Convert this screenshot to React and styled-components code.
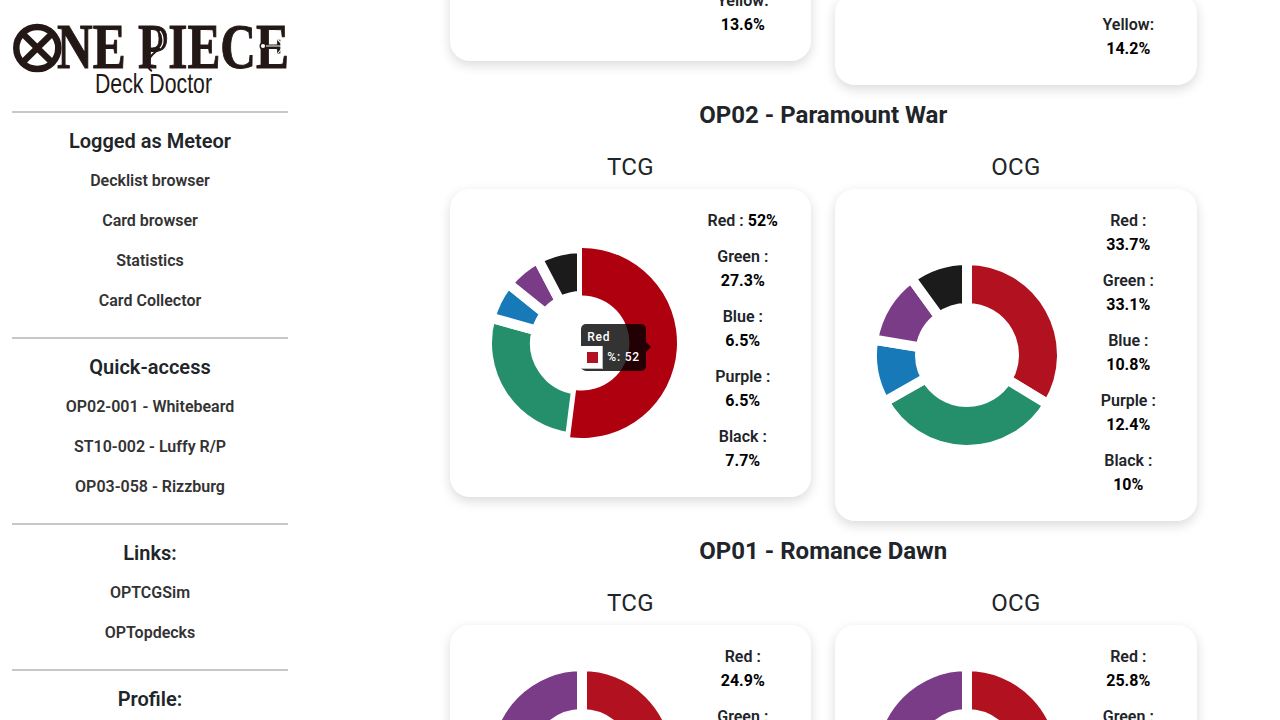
import React from "react";
import styled, { createGlobalStyle } from "styled-components";

const COLORS = {
  Red: "#b2121f",
  Green: "#258f6c",
  Blue: "#1879b8",
  Purple: "#7a3c87",
  Black: "#1b1b1b",
};

const SETS = [
  {
    title: "OP02 - Paramount War",
    tcg: { rows: [["Red", 52], ["Green", 27.3], ["Blue", 6.5], ["Purple", 6.5], ["Black", 7.7]], hover: 0 },
    ocg: { rows: [["Red", 33.7], ["Green", 33.1], ["Blue", 10.8], ["Purple", 12.4], ["Black", 10]] },
  },
  {
    title: "OP01 - Romance Dawn",
    tcg: { rows: [["Red", 24.9], ["Green", 25.1], ["Blue", 24.8], ["Purple", 25.2]] },
    ocg: { rows: [["Red", 25.8], ["Green", 24.7], ["Blue", 24.3], ["Purple", 25.2]] },
  },
];

const NAV = [
  { head: "Logged as Meteor", links: ["Decklist browser", "Card browser", "Statistics", "Card Collector"] },
  { head: "Quick-access", links: ["OP02-001 - Whitebeard", "ST10-002 - Luffy R/P", "OP03-058 - Rizzburg"] },
  { head: "Links:", links: ["OPTCGSim", "OPTopdecks"] },
  { head: "Profile:", links: [] },
];

const GlobalStyle = createGlobalStyle`
  html, body {
    margin: 0;
    height: 100%;
    overflow: hidden;
    background: #fff;
    font-family: Roboto, "Liberation Sans", sans-serif;
    color: #212529;
  }
`;

const Page = styled.div`
  display: flex;
  height: 720px;
  overflow: hidden;
`;

const Sidebar = styled.aside`
  flex: 0 0 300px;
  box-sizing: border-box;
  padding: 0 12px;
`;

const LogoBox = styled.div`
  height: 111px;
  margin: 0 -12px;
`;

const NavSection = styled.section`
  border-top: 2px solid #c8c8c8;
  padding: 16px 0 17px;
`;

const NavHead = styled.h5`
  margin: 0 0 7px;
  font-size: 20px;
  font-weight: 600;
  line-height: 24px;
  text-align: center;
`;

const NavLink = styled.a`
  display: block;
  height: 40px;
  font-size: 16px;
  font-weight: 600;
  line-height: 42px;
  text-align: center;
  color: #333;
`;

const Main = styled.main`
  flex: 1;
  box-sizing: border-box;
  padding: 0 83.25px 0 149.75px;
`;

const CardRow = styled.div`
  display: grid;
  grid-template-columns: 1fr 1fr;
  column-gap: 24px;
  align-items: start;
`;

const SetTitle = styled.h4`
  margin: 16px 0 24px;
  font-size: 24px;
  font-weight: 700;
  line-height: 28px;
  text-align: center;
`;

const RegionTitle = styled.h4`
  margin: 0 0 8px;
  font-size: 24px;
  font-weight: 400;
  letter-spacing: 0.3px;
  line-height: 28px;
  text-align: center;
`;

const Card = styled.div`
  display: flex;
  align-items: center;
  box-sizing: border-box;
  padding-left: 12px;
  margin-top: ${(p) => p.$pull || 0}px;
  background: #fff;
  border-radius: 20px;
  box-shadow: 0 4px 12px rgba(0, 0, 0, 0.15);
`;

const ChartSlot = styled.div`
  position: relative;
  flex: 0 0 240px;
  height: ${(p) => (p.$empty ? 0 : 240)}px;
`;

const Legend = styled.div`
  width: 76px;
  margin-left: 3px;
  padding: 20px 0 12px;
  text-align: center;
`;

const LegendRow = styled.p`
  margin: 0 0 12px;
  font-size: 16px;
  font-weight: 600;
  line-height: 24px;
`;

const LegendValue = styled.span`
  font-weight: 700;
  color: #000;
`;

const Tooltip = styled.div`
  position: absolute;
  left: 119.5px;
  top: 101px;
  width: 64.5px;
  height: 47px;
  box-sizing: border-box;
  border-radius: 5px;
  background: rgba(0, 0, 0, 0.8);
  color: #fff;
  font-size: 12px;
  font-weight: 500;
  letter-spacing: 0.8px;

  &::after {
    content: "";
    position: absolute;
    left: 100%;
    top: 18px;
    border: 5px solid transparent;
    border-left-color: rgba(0, 0, 0, 0.8);
    border-right-width: 0;
  }
`;

const TooltipTitle = styled.div`
  padding: 6px 0 0 6px;
  line-height: 15px;
  height: 22px;
  box-sizing: border-box;
`;

const TooltipBody = styled.div`
  display: flex;
  align-items: center;
  gap: 4px;
  line-height: 25px;
  height: 23px;
`;

const Swatch = styled.span`
  display: flex;
  align-items: center;
  justify-content: center;
  width: 22px;
  height: 23px;
  background: #fff;
  box-shadow: inset -1px -1px 0 #bbb;

  &::before {
    content: "";
    width: 11px;
    height: 11px;
    background: ${(p) => p.$color};
  }
`;

function polar(r, deg) {
  const a = ((deg - 90) * Math.PI) / 180;
  return `${(120 + r * Math.cos(a)).toFixed(2)} ${(120 + r * Math.sin(a)).toFixed(2)}`;
}

function sector(outer, inner, from, to) {
  const large = to - from > 180 ? 1 : 0;
  return `M${polar(outer, from)}A${outer} ${outer} 0 ${large} 1 ${polar(outer, to)}L${polar(inner, to)}A${inner} ${inner} 0 ${large} 0 ${polar(inner, from)}Z`;
}

const Donut = ({ rows, hover }) => {
  let at = 0;
  const parts = rows.map(([name, value], i) => {
    const from = at;
    at += value * 3.6;
    return { name, from, to: at, active: i === hover };
  });
  // the hovered slice goes last: it grows and loses its white border
  const sorted = [...parts].sort((a, b) => a.active - b.active);
  return (
    <svg width="240" height="240" viewBox="0 0 240 240">
      {sorted.map((p) =>
        p.active ? (
          <path key={p.name} d={sector(95, 47.5, p.from, p.to)} fill="#af0010" />
        ) : (
          <path key={p.name} d={sector(95, 47, p.from, p.to)} fill={COLORS[p.name]} stroke="#fff" strokeWidth="10" />
        )
      )}
    </svg>
  );
};

const Logo = () => (
  <svg width="300" height="111" viewBox="0 0 300 111">
    <circle cx="37.3" cy="48" r="21" fill="none" stroke="#231815" strokeWidth="6.5" />
    <path d="M22 33L52.6 63M52.6 33L22 63" stroke="#231815" strokeWidth="6.5" />
    <text x="57" y="68" fontFamily="'Liberation Serif', serif" fontWeight="700" fontSize="63" fill="#231815" stroke="#231815" strokeWidth="1" textLength="232" lengthAdjust="spacingAndGlyphs">
      NE PIECE
    </text>
    {/* the swirl on the P and the anchor through the last E */}
    <path d="M159 30c5 5 5 13 1 18c-5 5-12 8-12 17c0 3 2 5 4 6" fill="none" stroke="#231815" strokeWidth="2" />
    <path d="M160 31c4 5 4 13 0 17" fill="none" stroke="#fff" strokeWidth="1.2" />
    <circle cx="263" cy="46" r="2.8" fill="#fff" stroke="#231815" strokeWidth="1.4" />
    <path d="M266 46H284M278 40l6 6l-6 7" fill="none" stroke="#fff" strokeWidth="1.1" />
    <text x="95" y="92.5" fontFamily="'Liberation Sans', sans-serif" fontSize="28" fill="#231815" textLength="117" lengthAdjust="spacingAndGlyphs">
      Deck Doctor
    </text>
  </svg>
);

const Legends = ({ rows }) => (
  <Legend>
    {rows.map(([name, value]) => (
      <LegendRow key={name}>
        {name}{name === "Yellow" ? ":" : " :"} <LegendValue>{value}%</LegendValue>
      </LegendRow>
    ))}
  </Legend>
);

const ChartCard = ({ rows, hover }) => (
  <Card>
    <ChartSlot>
      <Donut rows={rows} hover={hover} />
      {hover !== undefined && (
        <Tooltip>
          <TooltipTitle>{rows[hover][0]}</TooltipTitle>
          <TooltipBody>
            <Swatch $color={COLORS[rows[hover][0]]} />
            %: {rows[hover][1]}
          </TooltipBody>
        </Tooltip>
      )}
    </ChartSlot>
    <Legends rows={rows} />
  </Card>
);

export default function App() {
  return (
    <>
      <GlobalStyle />
      <Page>
        <Sidebar>
          <LogoBox>
            <Logo />
          </LogoBox>
          {NAV.map((s) => (
            <NavSection key={s.head}>
              <NavHead>{s.head}</NavHead>
              {s.links.map((l) => (
                <NavLink key={l}>{l}</NavLink>
              ))}
            </NavSection>
          ))}
        </Sidebar>
        <Main>
          {/* page is scrolled: only the tail of the set above is in view */}
          <CardRow>
            <Card $pull={-31}>
              <ChartSlot $empty />
              <Legends rows={[["Yellow", 13.6]]} />
            </Card>
            <Card $pull={-7}>
              <ChartSlot $empty />
              <Legends rows={[["Yellow", 14.2]]} />
            </Card>
          </CardRow>
          {SETS.map((set) => (
            <section key={set.title}>
              <SetTitle>{set.title}</SetTitle>
              <CardRow>
                <RegionTitle>TCG</RegionTitle>
                <RegionTitle>OCG</RegionTitle>
              </CardRow>
              <CardRow>
                <ChartCard {...set.tcg} />
                <ChartCard {...set.ocg} />
              </CardRow>
            </section>
          ))}
        </Main>
      </Page>
    </>
  );
}
